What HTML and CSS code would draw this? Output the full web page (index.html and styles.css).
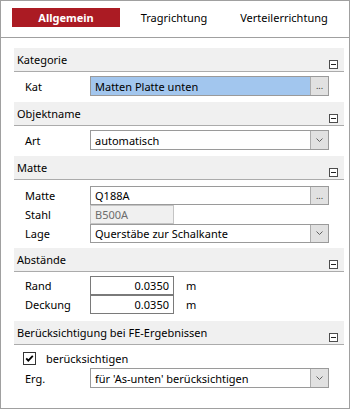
FILE: index.html
```html
<!DOCTYPE html>
<html lang="de">
<head>
  <meta charset="UTF-8" />
  <title>Matte - Eigenschaften</title>
  <link rel="stylesheet" href="styles.css">
</head>
<body>
  <div class="panel">
    <div class="tabs">
      <div class="tab active">Allgemein</div>
      <div class="tab">Tragrichtung</div>
      <div class="tab wide">Verteilerrichtung</div>
    </div>

    <div class="content">
      <!-- Kategorie -->
      <div class="group">
        <div class="group-head">
          <span>Kategorie</span>
          <svg class="collapse" width="9" height="9" viewBox="0 0 9 9"><rect x="0.5" y="0.5" width="8" height="8" fill="#fff" stroke="#4d4d4d"/><line x1="2" y1="4.5" x2="7" y2="4.5" stroke="#222"/></svg>
        </div>
        <div class="group-body pad-a">
          <div class="row tall">
            <div class="label">Kat</div>
            <div class="field big selected">
              <span class="value">Matten Platte unten</span>
              <span class="btn">...</span>
            </div>
          </div>
        </div>
      </div>

      <!-- Objektname -->
      <div class="group">
        <div class="group-head">
          <span>Objektname</span>
          <svg class="collapse" width="9" height="9" viewBox="0 0 9 9"><rect x="0.5" y="0.5" width="8" height="8" fill="#fff" stroke="#4d4d4d"/><line x1="2" y1="4.5" x2="7" y2="4.5" stroke="#222"/></svg>
        </div>
        <div class="group-body pad-a">
          <div class="row tall">
            <div class="label">Art</div>
            <div class="field big">
              <span class="value">automatisch</span>
              <span class="btn"><svg width="7" height="4" viewBox="0 0 7 4"><polyline points="0.5,0.5 3.5,3.5 6.5,0.5" fill="none" stroke="#606060"/></svg></span>
            </div>
          </div>
        </div>
      </div>

      <!-- Matte -->
      <div class="group">
        <div class="group-head">
          <span>Matte</span>
          <svg class="collapse" width="9" height="9" viewBox="0 0 9 9"><rect x="0.5" y="0.5" width="8" height="8" fill="#fff" stroke="#4d4d4d"/><line x1="2" y1="4.5" x2="7" y2="4.5" stroke="#222"/></svg>
        </div>
        <div class="group-body pad-b">
          <div class="row">
            <div class="label">Matte</div>
            <div class="field big">
              <span class="value">Q188A</span>
              <span class="btn">...</span>
            </div>
          </div>
          <div class="row">
            <div class="label">Stahl</div>
            <div class="field small disabled">
              <span class="value">B500A</span>
            </div>
          </div>
          <div class="row">
            <div class="label">Lage</div>
            <div class="field big">
              <span class="value">Querstäbe zur Schalkante</span>
              <span class="btn"><svg width="7" height="4" viewBox="0 0 7 4"><polyline points="0.5,0.5 3.5,3.5 6.5,0.5" fill="none" stroke="#606060"/></svg></span>
            </div>
          </div>
        </div>
      </div>

      <!-- Abstände -->
      <div class="group">
        <div class="group-head">
          <span>Abstände</span>
          <svg class="collapse" width="9" height="9" viewBox="0 0 9 9"><rect x="0.5" y="0.5" width="8" height="8" fill="#fff" stroke="#4d4d4d"/><line x1="2" y1="4.5" x2="7" y2="4.5" stroke="#222"/></svg>
        </div>
        <div class="group-body pad-c">
          <div class="row">
            <div class="label">Rand</div>
            <div class="field small number"><span class="value">0.0350</span></div>
            <span class="unit">m</span>
          </div>
          <div class="row">
            <div class="label">Deckung</div>
            <div class="field small number"><span class="value">0.0350</span></div>
            <span class="unit">m</span>
          </div>
        </div>
      </div>

      <!-- Berücksichtigung -->
      <div class="group">
        <div class="group-head">
          <span>Berücksichtigung bei FE-Ergebnissen</span>
          <svg class="collapse" width="9" height="9" viewBox="0 0 9 9"><rect x="0.5" y="0.5" width="8" height="8" fill="#fff" stroke="#4d4d4d"/><line x1="2" y1="4.5" x2="7" y2="4.5" stroke="#222"/></svg>
        </div>
        <div class="group-body pad-d">
          <div class="row check-row">
            <svg class="checkbox" width="13" height="13" viewBox="0 0 13 13"><rect x="0.5" y="0.5" width="12" height="12" fill="#fff" stroke="#333"/><polyline points="3.2,6.3 5.3,8.6 9.8,3.8" fill="none" stroke="#000" stroke-width="1.8"/></svg>
            <span>berücksichtigen</span>
          </div>
          <div class="row tall">
            <div class="label">Erg.</div>
            <div class="field big">
              <span class="value">für 'As-unten' berücksichtigen</span>
              <span class="btn"><svg width="7" height="4" viewBox="0 0 7 4"><polyline points="0.5,0.5 3.5,3.5 6.5,0.5" fill="none" stroke="#606060"/></svg></span>
            </div>
          </div>
        </div>
      </div>
    </div>
  </div>
</body>
</html>
```

FILE: styles.css
```css
* {
  box-sizing: border-box;
  margin: 0;
  padding: 0;
}

body {
  font-family: 'Noto Sans', sans-serif;
  font-size: 11px;
  color: #000;
  background: #fff;
}

.panel {
  width: 350px;
  height: 409px;
  border: 1px solid #a0a0a0;
}

/* tab strip */
.tabs {
  display: flex;
  height: 37px;
  padding: 7px 0 0 11px;
  border-bottom: 1px solid #a0a0a0;
}

.tab {
  width: 108px;
  height: 19px;
  display: flex;
  align-items: center;
  justify-content: center;
}

.tab.wide {
  width: 112px;
}

.tab.active {
  background: #ab1b23;
  color: #fff;
  font-weight: bold;
}

/* groups */
.content {
  padding: 10px 5px 0 13px;
}

.group-head {
  display: flex;
  justify-content: space-between;
  align-items: center;
  height: 24px;
  padding: 0 6px 0 3px;
  background: #f0f0f0;
  border-bottom: 1px solid #ababab;
}

.group-head .collapse {
  align-self: flex-end;
  margin-bottom: 2px;
}

.pad-a {
  padding: 4px 0 6px;
}

.pad-b {
  padding: 6px 0 5px;
}

.pad-c {
  padding: 4px 0 7px;
}

.pad-d {
  padding: 4px 0 0;
}

.row {
  display: flex;
  align-items: center;
  height: 19px;
  padding-left: 11px;
}

.row.tall {
  height: 20px;
}

.label {
  width: 65px;
}

/* input boxes */
.field {
  display: flex;
  height: 100%;
  border: 1px solid #9a9a9a;
  background: #fff;
}

.field.big {
  width: 239px;
}

.field.small {
  width: 84px;
}

.field .value {
  flex: 1;
  display: flex;
  align-items: center;
  padding-left: 4px;
  white-space: nowrap;
  overflow: hidden;
}

.field.selected .value {
  background: #a2c6ee;
}

.field.disabled {
  background: #f0f0f0;
  border-color: #c4c4c4;
  color: #6d6d6d;
}

.field.number {
  border-color: #7a7a7a;
}

.field.number .value {
  justify-content: flex-end;
  padding: 0 4px 0 0;
}

.field .btn {
  width: 18px;
  display: flex;
  align-items: center;
  justify-content: center;
  background: #e1e1e1;
  border-left: 1px solid #adadad;
  color: #333;
  font-size: 9px;
  padding-bottom: 1px;
}

.unit {
  margin-left: 12px;
}

.check-row {
  height: 19px;
  padding-left: 9px;
}

.checkbox {
  margin-right: 10px;
}
```
